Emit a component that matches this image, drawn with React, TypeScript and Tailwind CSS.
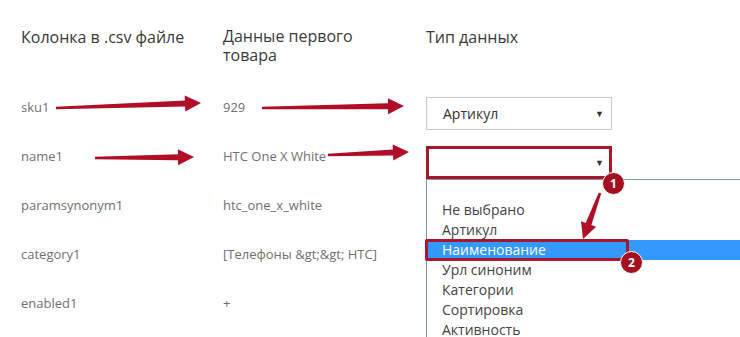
import React from "react";

const font = { fontFamily: '"Open Sans", "Noto Sans", sans-serif' };

const rows = [
  { col: "sku1", value: "929" },
  { col: "name1", value: "HTC One X White" },
  { col: "paramsynonym1", value: "htc_one_x_white" },
  { col: "category1", value: "[Телефоны &gt;&gt; HTC]" },
  { col: "enabled1", value: "+" },
];

const options = ["", "Не выбрано", "Артикул", "Наименование", "Урл синоним", "Категории", "Сортировка", "Активность"];

// annotation arrows: tail -> tip
const arrows = [
  [56, 108, 201, 103],
  [95, 158, 194, 157],
  [262, 108, 404, 106],
  [328, 155, 409, 152],
  [600, 193, 583, 239],
];

function arrowPoints(x1: number, y1: number, x2: number, y2: number) {
  const dx = x2 - x1;
  const dy = y2 - y1;
  const len = Math.hypot(dx, dy);
  const ux = dx / len;
  const uy = dy / len;
  const px = -uy;
  const py = ux;
  const head = Math.min(16, len * 0.35);
  const bx = x2 - ux * head;
  const by = y2 - uy * head;
  const p = (x: number, y: number) => `${x.toFixed(1)},${y.toFixed(1)}`;
  return [
    p(x1 + px * 1.3, y1 + py * 1.3),
    p(bx + px * 3, by + py * 3),
    p(bx + px * 8, by + py * 8),
    p(x2, y2),
    p(bx - px * 8, by - py * 8),
    p(bx - px * 3, by - py * 3),
    p(x1 - px * 1.3, y1 - py * 1.3),
  ].join(" ");
}

function Badge({ n }: { n: number }) {
  return (
    <div className="w-[23px] h-[23px] rounded-full bg-[#a3101f] border border-white text-white text-[12px] font-bold flex items-center justify-center">
      {n}
    </div>
  );
}

export default function App() {
  return (
    <div className="relative w-[740px] h-[337px] overflow-hidden bg-white" style={font}>
      <div className="grid grid-cols-[202px_203px_1fr] pl-[21px] pt-[27px]">
        <div className="text-[16px] leading-[20px] text-[#3a3a3a]">Колонка в .csv файле</div>
        <div className="text-[16px] leading-[19px] text-[#3a3a3a] w-[150px]">Данные первого товара</div>
        <div className="text-[16px] leading-[20px] text-[#3a3a3a]">Тип данных</div>
      </div>

      <div className="flex flex-col pl-[21px] pt-[32px]">
        {rows.map((r, i) => (
          <div key={r.col} className="grid grid-cols-[202px_203px_1fr] h-[49px] text-[13px] text-[#707070]">
            <div className="leading-[20px]">{r.col}</div>
            <div className="leading-[20px]">{r.value}</div>
            <div>
              {i === 0 && (
                <div className="w-[186px] h-[33px] border border-[#c9c9c9] bg-white flex items-center justify-between pl-[16px] pr-[7px] text-[14px] text-[#333]">
                  <span>Артикул</span>
                  <span className="text-[9px] text-[#333]">▼</span>
                </div>
              )}
              {i === 1 && (
                <div className="relative">
                  <div className="absolute left-0 top-[33px] w-[360px] h-[200px] border-l border-t border-[#7f97b2] bg-white text-[14px] leading-[20px] text-[#444]">
                    {options.map((o, k) => (
                      <div
                        key={k}
                        className={
                          k === 3
                            ? "h-[20px] pl-[15px] bg-[#3399ff] text-white"
                            : "h-[20px] pl-[15px]"
                        }
                      >
                        {o}
                      </div>
                    ))}
                  </div>
                  <div className="relative w-[186px] h-[33px] border-[3px] border-[#a8172b] bg-white flex items-center justify-end pr-[5px] text-[#333]">
                    <span className="text-[9px]">▼</span>
                  </div>
                </div>
              )}
            </div>
          </div>
        ))}
      </div>

      {/* highlight frame around the chosen option */}
      <div className="absolute left-[425px] top-[239px] w-[204px] h-[22px] border-[3px] border-[#a8172b] rounded-[2px]" />

      <svg className="absolute inset-0" width="740" height="337">
        {arrows.map((a, i) => (
          <polygon key={i} points={arrowPoints(a[0], a[1], a[2], a[3])} fill="#b10d26" />
        ))}
      </svg>

      <div className="absolute left-[602px] top-[172px]">
        <Badge n={1} />
      </div>
      <div className="absolute left-[620px] top-[251px]">
        <Badge n={2} />
      </div>
    </div>
  );
}
